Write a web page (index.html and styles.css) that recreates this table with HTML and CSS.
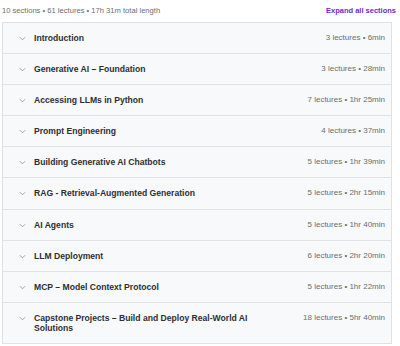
FILE: index.html
```html
<!DOCTYPE html>
<html>
<head>
<meta charset="utf-8">
<link rel="stylesheet" href="styles.css">
</head>
<body>
<div class="curriculum">
  <div class="head">
    <span class="summary">10 sections • 61 lectures • 17h 31m total length</span>
    <span class="expand">Expand all sections</span>
  </div>
  <div class="sections">
    <div class="row"><svg class="chev" viewBox="0 0 8 5"><polyline points="1,1 4,4 7,1"/></svg><span class="title">Introduction</span><span class="meta">3 lectures • 6min</span></div>
    <div class="row"><svg class="chev" viewBox="0 0 8 5"><polyline points="1,1 4,4 7,1"/></svg><span class="title">Generative AI – Foundation</span><span class="meta">3 lectures • 28min</span></div>
    <div class="row"><svg class="chev" viewBox="0 0 8 5"><polyline points="1,1 4,4 7,1"/></svg><span class="title">Accessing LLMs in Python</span><span class="meta">7 lectures • 1hr 25min</span></div>
    <div class="row"><svg class="chev" viewBox="0 0 8 5"><polyline points="1,1 4,4 7,1"/></svg><span class="title">Prompt Engineering</span><span class="meta">4 lectures • 37min</span></div>
    <div class="row"><svg class="chev" viewBox="0 0 8 5"><polyline points="1,1 4,4 7,1"/></svg><span class="title">Building Generative AI Chatbots</span><span class="meta">5 lectures • 1hr 39min</span></div>
    <div class="row"><svg class="chev" viewBox="0 0 8 5"><polyline points="1,1 4,4 7,1"/></svg><span class="title">RAG - Retrieval-Augmented Generation</span><span class="meta">5 lectures • 2hr 15min</span></div>
    <div class="row"><svg class="chev" viewBox="0 0 8 5"><polyline points="1,1 4,4 7,1"/></svg><span class="title">AI Agents</span><span class="meta">5 lectures • 1hr 40min</span></div>
    <div class="row"><svg class="chev" viewBox="0 0 8 5"><polyline points="1,1 4,4 7,1"/></svg><span class="title">LLM Deployment</span><span class="meta">6 lectures • 2hr 20min</span></div>
    <div class="row"><svg class="chev" viewBox="0 0 8 5"><polyline points="1,1 4,4 7,1"/></svg><span class="title">MCP – Model Context Protocol</span><span class="meta">5 lectures • 1hr 22min</span></div>
    <div class="row"><svg class="chev" viewBox="0 0 8 5"><polyline points="1,1 4,4 7,1"/></svg><span class="title">Capstone Projects – Build and Deploy Real-World AI Solutions</span><span class="meta">18 lectures • 5hr 40min</span></div>
  </div>
</div>
</body>
</html>
```
FILE: styles.css
```css
html, body {
  margin: 0;
  padding: 0;
  background: #ffffff;
}
body {
  font-family: "Liberation Sans", Arial, sans-serif;
  width: 400px;
}
.curriculum {
  padding: 0 4px 0 2px;
}
.head {
  height: 21.5px;
  display: flex;
  align-items: center;
  justify-content: space-between;
}
.summary {
  font-size: 7.6px;
  color: #6a6f73;
}
.expand {
  font-size: 7.5px;
  font-weight: bold;
  color: #6d28d2;
}
.sections {
  width: 388px;
  border: 1px solid #dfe2e5;
  background: #f7f9fa;
}
.row {
  display: flex;
  align-items: flex-start;
  padding: 10px 6px 10.2px 15px;
  border-bottom: 1px solid #dfe2e5;
  line-height: 10px;
}
.row:last-child {
  border-bottom: none;
}
.chev {
  width: 7px;
  height: 5px;
  margin-top: 3px;
  margin-left: 0.5px;
  margin-right: 8.5px;
  flex: none;
  fill: none;
  stroke: #8c9094;
  stroke-width: 0.9;
}
.title {
  flex: 1;
  font-size: 8.6px;
  font-weight: bold;
  color: #2d2f31;
}
.meta {
  flex: none;
  margin-left: 16px;
  font-size: 8px;
  color: #6a6f73;
  white-space: nowrap;
}
```
